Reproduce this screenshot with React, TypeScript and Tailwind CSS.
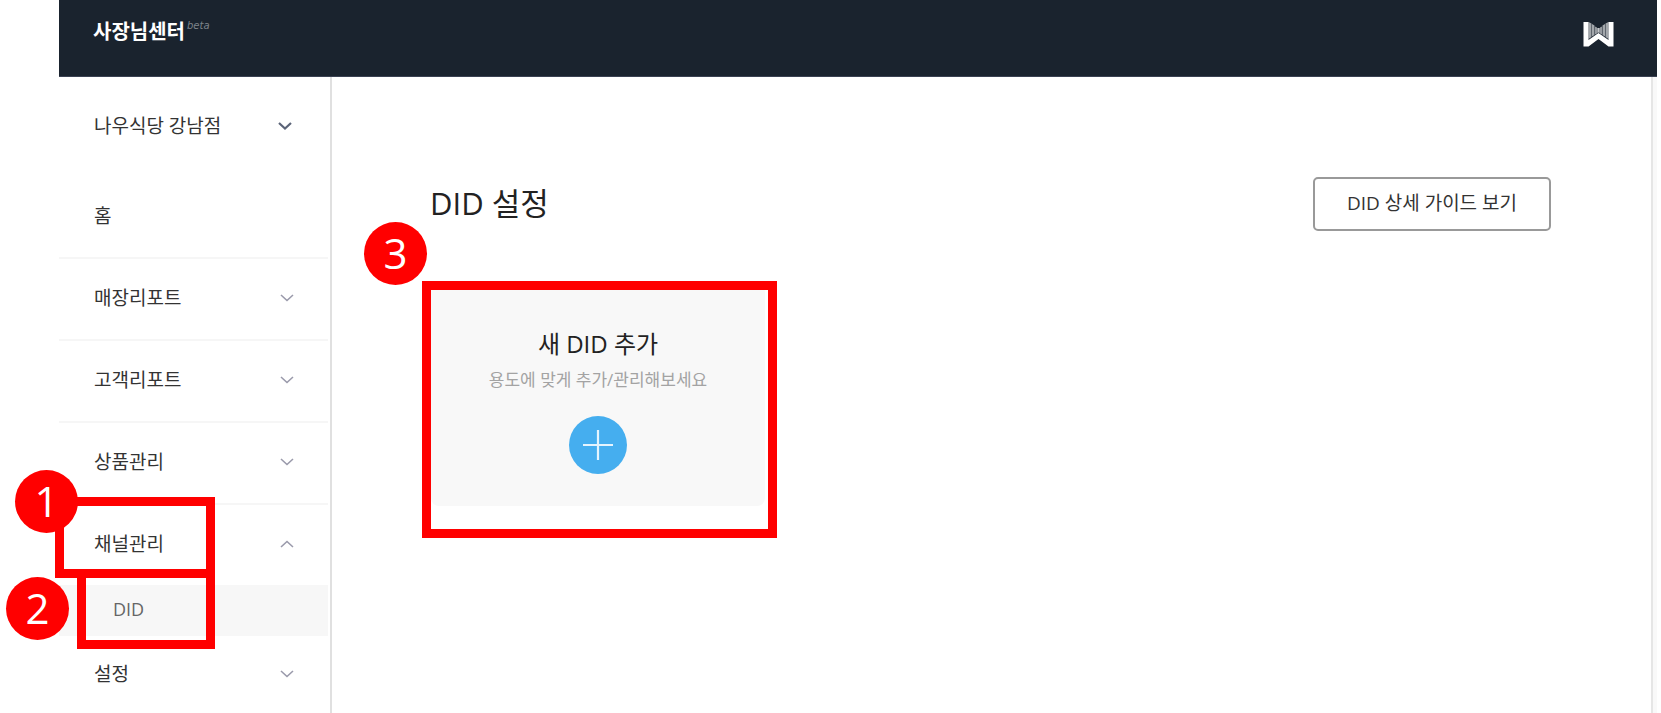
import React from 'react';

type MenuItem = { label: string };

const reportItems: MenuItem[] = [{ label: '매장리포트' }, { label: '고객리포트' }, { label: '상품관리' }];

function Chevron({ up = false, strong = false }: { up?: boolean; strong?: boolean }) {
  return (
    <svg
      className={strong ? 'h-2 w-3.5 text-[#5b6478]' : 'h-2 w-3.5 text-[#9a9aab]'}
      viewBox="0 0 14 8"
      fill="none"
      stroke="currentColor"
      strokeWidth={strong ? 2.2 : 1.6}
      aria-hidden="true"
    >
      <path d={up ? 'M1 7L7 1.5L13 7' : 'M1 1L7 6.5L13 1'} />
    </svg>
  );
}

function Logo() {
  return (
    <svg className="h-[26px] w-[31px]" viewBox="0 0 31 26" fill="#fff" aria-hidden="true">
      <path d="M0.500 1H5.500V19L15.500 12L25.500 19V1H30.500V25.500H25.500L15.500 18L5.500 25.500H0.500Z" />
      <path d="M5.500 1L8.500 2.500V16L5.500 18ZM25.500 1L22.500 2.500V16L25.500 18Z" opacity=".6" />
      <path d="M9 3L11.500 4.500V14L9 15.500ZM22 3L19.500 4.500V14L22 15.500Z" opacity=".6" />
      <path d="M12 5.500L14 6.500V12.500L12 13.500ZM19 5.500L17 6.500V12.500L19 13.500Z" opacity=".55" />
      <path d="M14.300 7H16.700V12L15.500 11.500L14.300 12Z" opacity=".75" />
    </svg>
  );
}

function Step({ n, className }: { n: number; className: string }) {
  return (
    <span
      className={`absolute z-20 flex size-[63px] items-center justify-center rounded-full bg-[#ff0000] pb-0.5 text-[42px] leading-none text-white ${className}`}
    >
      {n}
    </span>
  );
}

function Ring({ className }: { className: string }) {
  return <span className={`pointer-events-none absolute z-10 border-[9px] border-[#ff0000] ${className}`} />;
}

const rowClass = 'flex w-full items-center justify-between pb-0.5 pl-[35px] pr-[34px] text-left text-[19px] leading-7';

export default function App() {
  return (
    <div className="flex min-h-screen flex-col overflow-x-hidden bg-white pl-[59px] pr-1 font-['Open_Sans','Noto_Sans_CJK_KR',sans-serif] text-[#333]">
      <header className="flex h-[77px] items-start justify-between border-b border-[#3a4152] bg-[#1a232e] pl-[34px] pr-[43px]">
        <a href="#" className="flex items-start gap-0.5 pt-[18px] text-white">
          <span className="text-[20px] font-bold leading-7">사장님센터</span>
          <span className="font-['DejaVu_Sans',sans-serif] text-[10px] italic leading-4 text-[#7d838b]">beta</span>
        </a>
        <a href="#" aria-label="홈으로" className="pt-[21px]">
          <Logo />
        </a>
      </header>

      <div className="flex flex-1">
        <aside className="w-[273px] shrink-0 border-r-2 border-[#e0e0e0] pr-0.5">
          <button type="button" className="flex h-[99px] w-full items-center justify-between pb-0.5 pl-[35px] pr-9 text-left text-[19px] leading-7">
            나우식당 강남점
            <Chevron strong />
          </button>
          <nav>
            <ul>
              <li className="border-b-2 border-[#f6f6f6]">
                <a href="#" className={`${rowClass} h-[81px]`}>홈</a>
              </li>
              {reportItems.map((item) => (
                <li key={item.label} className="border-b-2 border-[#f6f6f6]">
                  <button type="button" className={`${rowClass} h-20`}>
                    {item.label}
                    <Chevron />
                  </button>
                </li>
              ))}
              <li className="relative">
                <button type="button" aria-expanded="true" className={`${rowClass} h-20`}>
                  채널관리
                  <Chevron up />
                </button>
                <Ring className="-left-1 -top-2 h-[81px] w-40" />
                <Step n={1} className="-left-11 -top-[35px]" />
                <ul className="relative">
                  <li className="bg-[#f7f7f7]">
                    <a href="#" className="flex h-[51px] items-center pb-1 pl-[54px] text-[18px] leading-7 text-[#666]">DID</a>
                  </li>
                  <li aria-hidden="true">
                    <Ring className="-top-4 left-[18px] h-20 w-[138px]" />
                    <Step n={2} className="-left-[53px] -top-2" />
                  </li>
                </ul>
              </li>
              <li>
                <button type="button" className={`${rowClass} h-[77px]`}>
                  설정
                  <Chevron />
                </button>
              </li>
            </ul>
          </nav>
        </aside>

        <main className="flex-1 pl-[98px] pr-[100px] pt-[100px]">
          <div className="flex items-start justify-between">
            <h1 className="text-[31px] leading-[52px] text-[#222]">DID 설정</h1>
            <button type="button" className="h-[54px] rounded-[5px] border-2 border-[#999] px-8 pb-0.5 text-[19px] leading-7 text-[#333]">
              DID 상세 가이드 보기
            </button>
          </div>
          <section className="relative mt-[53px] ml-px w-[334px]">
            <button type="button" className="flex h-[222px] w-full flex-col items-center rounded-lg bg-[#f8f8f8] pt-11">
              <span className="text-[24px] leading-8 text-[#222]">새 DID 추가</span>
              <span className="mt-2 text-[17px] leading-6 text-[#a3a3a3]">용도에 맞게 추가/관리해보세요</span>
              <span className="mt-6 flex size-[58px] items-center justify-center rounded-full bg-[#45aeef]">
                <svg className="size-[30px]" viewBox="0 0 30 30" stroke="#e4f4fe" strokeWidth="2.2" aria-hidden="true">
                  <path d="M15 0V30M0 15H30" />
                </svg>
              </span>
            </button>
            <Ring className="-left-[9px] -top-[3px] h-[257px] w-[355px]" />
            <Step n={3} className="-left-[67px] -top-[62px]" />
          </section>
        </main>
        <div className="w-1.5 border-l-2 border-[#e6e6e6] bg-[#f9f9f9]" />
      </div>
    </div>
  );
}
